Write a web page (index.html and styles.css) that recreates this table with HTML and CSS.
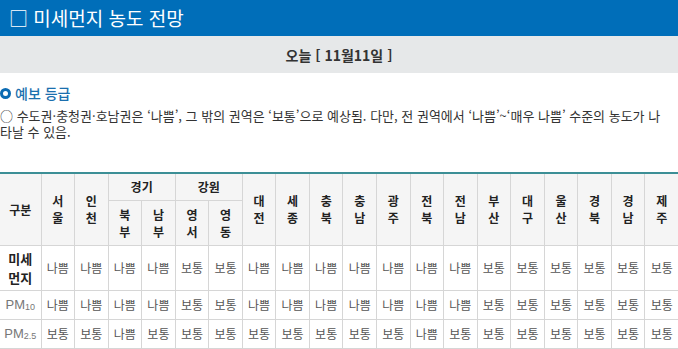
FILE: index.html
```html
<!DOCTYPE html>
<html lang="ko">
<head>
<meta charset="utf-8">
<link rel="stylesheet" href="styles.css">
</head>
<body>
<div class="title-bar"><h1 class="title">□ 미세먼지 농도 전망</h1></div>
<div class="date-bar">오늘 [ 11월11일 ]</div>
<section class="grade">
  <h2 class="grade-title"><span class="bullet"></span>예보 등급</h2>
  <p class="grade-text">○ 수도권·충청권·호남권은 ‘나쁨’, 그 밖의 권역은 ‘보통’으로 예상됨. 다만, 전 권역에서 ‘나쁨’~‘매우 나쁨’ 수준의 농도가 나타날 수 있음.</p>
</section>
<table class="fc">
  <colgroup><col class="c-first"><col span="19"></colgroup>
  <thead>
    <tr class="h1">
      <th rowspan="2">구분</th>
      <th rowspan="2">서<br>울</th>
      <th rowspan="2">인<br>천</th>
      <th colspan="2">경기</th>
      <th colspan="2">강원</th>
      <th rowspan="2">대<br>전</th>
      <th rowspan="2">세<br>종</th>
      <th rowspan="2">충<br>북</th>
      <th rowspan="2">충<br>남</th>
      <th rowspan="2">광<br>주</th>
      <th rowspan="2">전<br>북</th>
      <th rowspan="2">전<br>남</th>
      <th rowspan="2">부<br>산</th>
      <th rowspan="2">대<br>구</th>
      <th rowspan="2">울<br>산</th>
      <th rowspan="2">경<br>북</th>
      <th rowspan="2">경<br>남</th>
      <th rowspan="2">제<br>주</th>
    </tr>
    <tr class="h2">
      <th>북<br>부</th><th>남<br>부</th><th>영<br>서</th><th>영<br>동</th>
    </tr>
  </thead>
  <tbody>
    <tr class="r-main">
      <th>미세<br>먼지</th>
      <td>나쁨</td><td>나쁨</td><td>나쁨</td><td>나쁨</td><td>보통</td><td>보통</td><td>나쁨</td><td>나쁨</td><td>나쁨</td><td>나쁨</td><td>나쁨</td><td>나쁨</td><td>나쁨</td><td>보통</td><td>보통</td><td>보통</td><td>보통</td><td>보통</td><td>보통</td>
    </tr>
    <tr class="r-pm">
      <td class="pm">PM<sub>10</sub></td>
      <td>나쁨</td><td>나쁨</td><td>나쁨</td><td>나쁨</td><td>보통</td><td>보통</td><td>나쁨</td><td>나쁨</td><td>나쁨</td><td>나쁨</td><td>나쁨</td><td>나쁨</td><td>나쁨</td><td>보통</td><td>보통</td><td>보통</td><td>보통</td><td>보통</td><td>보통</td>
    </tr>
    <tr class="r-pm">
      <td class="pm">PM<sub>2.5</sub></td>
      <td>보통</td><td>보통</td><td>나쁨</td><td>보통</td><td>보통</td><td>보통</td><td>보통</td><td>보통</td><td>보통</td><td>보통</td><td>보통</td><td>나쁨</td><td>보통</td><td>보통</td><td>보통</td><td>보통</td><td>보통</td><td>보통</td><td>보통</td>
    </tr>
  </tbody>
</table>
</body>
</html>
```

FILE: styles.css
```css
html, body {
  margin: 0;
  padding: 0;
  background: #ffffff;
  font-family: "Noto Sans CJK KR", "Noto Sans", sans-serif;
  color: #333;
  overflow: hidden;
}
.title-bar {
  background: #006eb9;
  height: 36px;
  display: flex;
  align-items: center;
  padding-left: 9px;
}
.title {
  margin: 0;
  font-size: 19px;
  font-weight: 400;
  color: #fff;
  line-height: 24px;
}
.date-bar {
  background: #e6e8e9;
  height: 37px;
  display: flex;
  align-items: center;
  justify-content: center;
  font-size: 14px;
  font-weight: 700;
  color: #333;
}
.grade {
  padding-top: 10px;
}
.grade-title {
  margin: 0;
  display: flex;
  align-items: center;
  gap: 4px;
  font-size: 14px;
  font-weight: 500;
  color: #1b6fae;
  line-height: 20px;
}
.bullet {
  width: 5px;
  height: 5px;
  border: 3px solid #0b6bb3;
  border-radius: 50%;
  box-sizing: content-box;
}
.grade-text {
  margin: 5px 0 0;
  padding-right: 15px;
  font-size: 13px;
  line-height: 16px;
  color: #333;
}
.fc {
  margin-top: 32px;
  width: 679px;
  table-layout: fixed;
  border-collapse: collapse;
  border-top: 2px solid #3c8f96;
  font-size: 12px;
}
.c-first { width: 41px; }
.fc th, .fc td {
  border: 1px solid #d6d6d6;
  text-align: center;
  vertical-align: middle;
  padding: 0;
}
.fc tr > :first-child { border-left: none; }
.fc thead th {
  background: #f5f5f5;
  font-weight: 700;
  color: #222;
  line-height: 17px;
}
.h1 { height: 27px; }
.h2 { height: 45px; }
.r-main { height: 45px; }
.r-main th {
  font-weight: 700;
  color: #222;
  line-height: 19px;
  font-size: 13px;
}
.r-pm { height: 29px; }
.fc td {
  color: #555;
}
.pm {
  color: #777 !important;
  font-family: "Liberation Sans", Arial, sans-serif;
  font-size: 13px;
  white-space: nowrap;
}
.pm sub {
  font-size: 9px;
  vertical-align: -1px;
}
```
